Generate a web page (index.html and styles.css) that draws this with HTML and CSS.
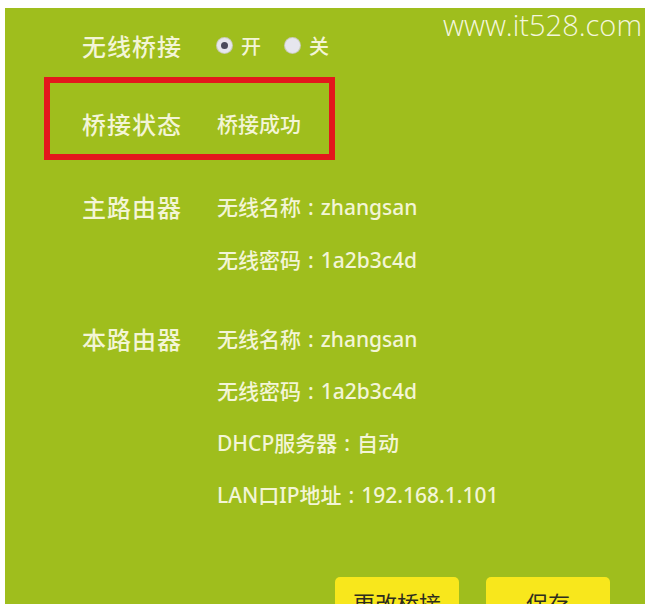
FILE: index.html
```html
<!DOCTYPE html>
<html lang="zh-CN">
  <head>
    <meta charset="UTF-8" />
    <meta name="viewport" content="width=device-width, initial-scale=1.0" />
    <title>无线桥接</title>
    <link rel="stylesheet" href="styles.css">
  </head>
  <body>
    <div class="panel">
      <div class="site">www.it528.com</div>

      <div class="row">
        <div class="label">无线桥接</div>
        <div class="radios">
          <label class="radio"><span class="dot checked"></span>开</label>
          <label class="radio"><span class="dot"></span>关</label>
        </div>
      </div>

      <div class="status">
        <div class="row">
          <div class="label">桥接状态</div>
          <div class="value">桥接成功</div>
        </div>
      </div>

      <div class="section main">
        <div class="row">
          <div class="label">主路由器</div>
          <div class="value">无线名称<span class="colon">:</span>zhangsan</div>
        </div>
        <div class="row">
          <div class="label"></div>
          <div class="value">无线密码<span class="colon">:</span>1a2b3c4d</div>
        </div>
      </div>

      <div class="section local">
        <div class="row">
          <div class="label">本路由器</div>
          <div class="value">无线名称<span class="colon">:</span>zhangsan</div>
        </div>
        <div class="row">
          <div class="label"></div>
          <div class="value">无线密码<span class="colon">:</span>1a2b3c4d</div>
        </div>
        <div class="row">
          <div class="label"></div>
          <div class="value">DHCP服务器<span class="colon">:</span>自动</div>
        </div>
        <div class="row">
          <div class="label"></div>
          <div class="value">LAN口IP地址<span class="colon">:</span>192.168.1.101</div>
        </div>
      </div>

      <div class="actions">
        <button type="button">更改桥接</button>
        <button type="button">保存</button>
      </div>
    </div>
  </body>
</html>
```

FILE: styles.css
```css
body {
  margin: 0;
  background: #fff;
  font-family: "Noto Sans", "Noto Sans CJK SC", sans-serif;
  overflow: hidden;
}

.panel {
  position: relative;
  margin: 8px 5px 0 5px;
  height: 596px;
  padding: 22px 0 0 0;
  box-sizing: border-box;
  background: #9fbe1d;
  color: #f3f5d6;
}

.site {
  position: absolute;
  top: 1px;
  right: 3px;
  font-family: "Open Sans", sans-serif;
  font-weight: 300;
  font-size: 29px;
  line-height: 32px;
  color: #f4f6dc;
}

.row {
  display: flex;
  align-items: center;
  height: 30px;
  padding-left: 77px;
}

.label {
  width: 135px;
  font-size: 24px;
  font-weight: 500;
  letter-spacing: 1px;
}

.value {
  font-size: 21px;
  font-weight: 500;
}

.colon {
  margin: 0 7px 0 7px;
}

.radios {
  display: flex;
  gap: 24px;
  font-size: 20px;
  font-weight: 500;
}

.radio {
  display: flex;
  align-items: center;
  gap: 9px;
}

.dot {
  width: 15px;
  height: 15px;
  border-radius: 50%;
  background: #e6e6ee;
  box-shadow: 0 0 0 1px #c9cbb8;
  display: flex;
  align-items: center;
  justify-content: center;
}

.dot.checked::after {
  content: "";
  width: 7px;
  height: 7px;
  border-radius: 50%;
  background: #4b4a5c;
}

.status {
  margin: 17px 0 0 39px;
  width: 279px;
  border: 6px solid #e3181c;
  padding: 25px 0 16px 0;
}

.status .row {
  padding-left: 32px;
}

.main {
  margin-top: 31px;
  display: flex;
  flex-direction: column;
  gap: 23px;
}

.local {
  margin-top: 49px;
  display: flex;
  flex-direction: column;
  gap: 22px;
}

.actions {
  display: flex;
  gap: 27px;
  margin-top: 68px;
  padding-left: 330px;
}

button {
  width: 124px;
  height: 44px;
  border: 0;
  border-radius: 5px;
  background: #f8e71c;
  color: #2d2d20;
  font-family: "Noto Sans CJK SC", sans-serif;
  font-size: 22px;
  padding: 6px 0 0 0;
  line-height: 30px;
}
```
